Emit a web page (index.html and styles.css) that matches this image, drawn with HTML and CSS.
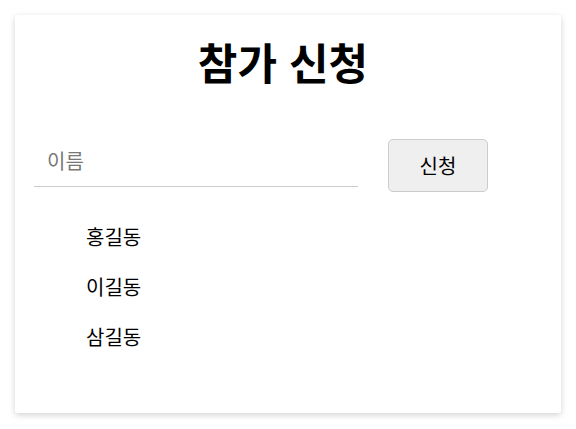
FILE: index.html
```html
<!DOCTYPE html>
<html lang="ko">
<head>
<meta charset="utf-8">
<link rel="stylesheet" href="styles.css">
</head>
<body>
<div class="card">
  <h1 class="title">참가 신청</h1>
  <form class="form">
    <input class="name-input" type="text" placeholder="이름">
    <button class="submit" type="button">신청</button>
  </form>
  <ul class="list">
    <li>홍길동</li>
    <li>이길동</li>
    <li>삼길동</li>
  </ul>
</div>
</body>
</html>
```
FILE: styles.css
```css
* { box-sizing: border-box; }
html, body { margin: 0; padding: 0; background: #fff; }
body {
  padding: 15px;
  font-family: "Noto Sans CJK KR", "Noto Sans", sans-serif;
  color: #000;
}
.card {
  height: 398px;
  background: #fff;
  box-shadow: 0 2px 6px rgba(0,0,0,0.18);
  border-radius: 2px;
  padding: 15px 19px 0;
}
.title {
  margin: 0;
  padding-right: 10px;
  text-align: center;
  font-size: 43px;
  line-height: 62px;
  font-weight: 700;
}
.form {
  display: flex;
  align-items: flex-start;
  gap: 30px;
  margin-top: 47px;
}
.name-input {
  width: 324px;
  height: 48px;
  border: none;
  border-bottom: 1px solid #ccc;
  padding: 0 13px 4px;
  font-family: inherit;
  font-size: 20px;
  outline: none;
  color: #000;
}
.name-input::placeholder { color: #777; }
.submit {
  width: 100px;
  height: 53px;
  background: #efefef;
  border: 1px solid #ccc;
  border-radius: 5px;
  font-family: inherit;
  font-size: 20px;
  color: #000;
}
.list {
  list-style: none;
  margin: 32px 0 0;
  padding: 0 0 0 52px;
}
.list li {
  font-size: 20px;
  line-height: 26px;
  margin-bottom: 24px;
}
```
